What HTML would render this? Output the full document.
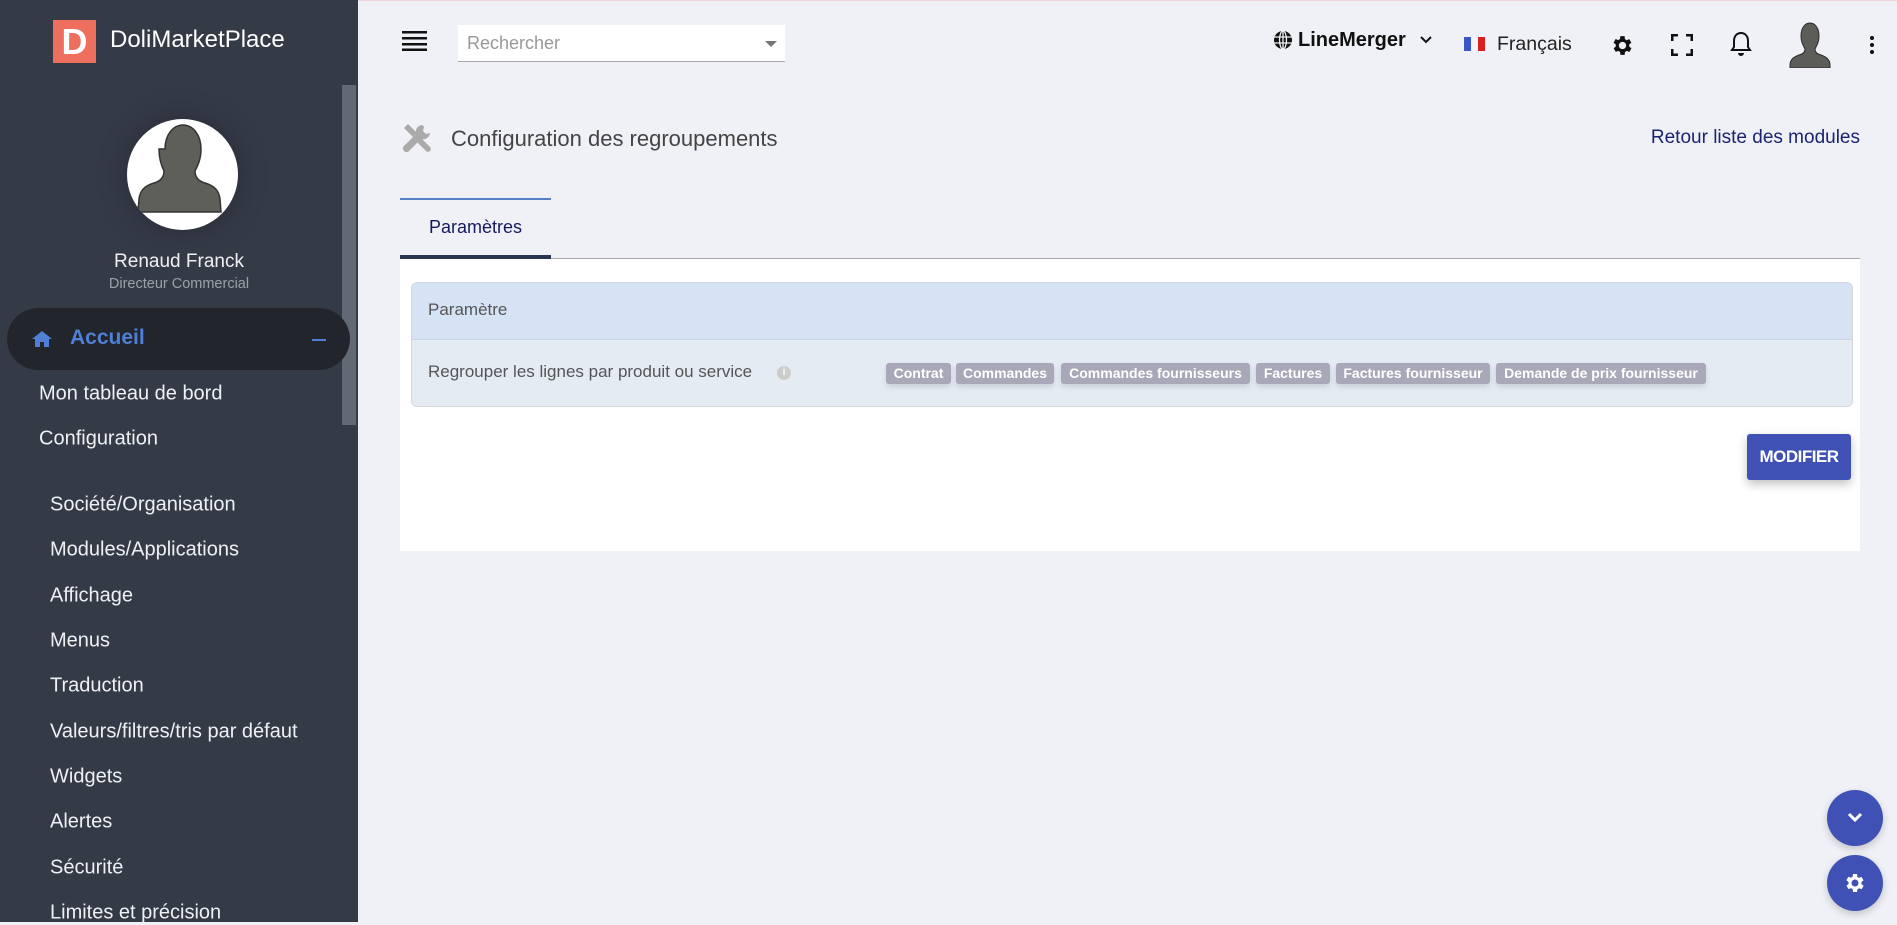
<!DOCTYPE html>
<html><head><meta charset="utf-8"><style>
*{margin:0;padding:0;box-sizing:border-box}
body{width:1897px;height:922px;overflow:hidden;background:#f0f1f6;font-family:"Liberation Sans",sans-serif;position:relative}
.a{position:absolute}
#side{left:0;top:0;width:358px;height:922px;background:#353a47}
.mi{position:absolute;color:#eef0f4;font-size:20px;white-space:nowrap;transform:translateY(-50%)}
.badge{position:absolute;top:363px;height:21px;background:#a9a8b9;color:#fff;font-family:"Liberation Sans Narrow","Liberation Sans",sans-serif;font-weight:bold;font-size:14px;line-height:21px;text-align:center;border-radius:3px;box-shadow:0 3px 6px rgba(0,0,0,.12)}
</style></head><body>
<div class="a" style="left:0;top:0;width:1897px;height:1px;background:#f3d3da"></div>
<div id="side" class="a">
  <div class="a" style="left:53px;top:20px;width:43px;height:43px;background:#ef6f5f;color:#fff;font-weight:bold;font-size:36px;line-height:43px;text-align:center">D</div>
  <div class="a" style="left:110px;top:26px;color:#fff;font-size:24px">DoliMarketPlace</div>
  <div class="a" style="left:342px;top:85px;width:14px;height:340px;background:#636875"></div>
  <div class="a" style="left:127px;top:119px;width:111px;height:111px;border-radius:50%;background:#fff;box-shadow:0 0 30px rgba(0,0,0,.25);overflow:hidden">
    <svg width="111" height="111" viewBox="0 0 111 111"><path d="M38 30c0-14 8-24 18-24s18 10 18 24c0 10-3 16-6 22 0 6 3 10 10 12 10 3 14 8 15 16l1 13H11l1-13c1-8 5-13 15-16 7-2 10-6 10-12-3-6-5-12-5-22z" fill="#5f5f5a" stroke="#333" stroke-width="1.5"/></svg>
  </div>
  <div class="a" style="left:0;width:358px;top:251px;text-align:center;color:#f0f0f0;font-size:19px">Renaud Franck</div>
  <div class="a" style="left:0;width:358px;top:276px;text-align:center;color:#9ca0aa;font-size:14.5px">Directeur Commercial</div>
  <div class="a" style="left:7px;top:308px;width:343px;height:62px;border-radius:31px;background:#22252c"></div>
  <svg class="a" style="left:31px;top:330px" width="22" height="18" viewBox="0 0 22 18"><path d="M11 1L1 9h3v8h5v-5h4v5h5V9h3z" fill="#4f7fd6"/></svg>
  <div class="a" style="left:70px;top:326px;color:#4f7fd6;font-size:21px;font-weight:bold">Accueil</div>
  <div class="a" style="left:312px;top:339px;width:14px;height:2px;background:#4f7fd6"></div>
  <div class="mi" style="left:39px;top:394px">Mon tableau de bord</div>
  <div class="mi" style="left:39px;top:439px">Configuration</div>
  <div class="mi" style="left:50px;top:505px">Société/Organisation</div>
  <div class="mi" style="left:50px;top:550px">Modules/Applications</div>
  <div class="mi" style="left:50px;top:596px">Affichage</div>
  <div class="mi" style="left:50px;top:641px">Menus</div>
  <div class="mi" style="left:50px;top:686px">Traduction</div>
  <div class="mi" style="left:50px;top:732px">Valeurs/filtres/tris par défaut</div>
  <div class="mi" style="left:50px;top:777px">Widgets</div>
  <div class="mi" style="left:50px;top:822px">Alertes</div>
  <div class="mi" style="left:50px;top:868px">Sécurité</div>
  <div class="mi" style="left:50px;top:913px">Limites et précision</div>
</div>
<!-- top bar -->
<svg class="a" style="left:402px;top:31px" width="25" height="20"><g fill="#111"><rect y="0" width="25" height="2.5"/><rect y="6" width="25" height="2.5"/><rect y="12" width="25" height="2.5"/><rect y="17.5" width="25" height="2.5"/></g></svg>
<div class="a" style="left:458px;top:25px;width:327px;height:37px;background:#fff;border-bottom:1px solid #aaa"></div>
<div class="a" style="left:467px;top:33px;color:#999;font-size:18px">Rechercher</div>
<div class="a" style="left:765px;top:41px;border-left:6px solid transparent;border-right:6px solid transparent;border-top:6px solid #777"></div>
<svg class="a" style="left:1273px;top:30px" width="20" height="20" viewBox="0 0 20 20"><circle cx="10" cy="10" r="9" fill="#111"/><g stroke="#f0f1f6" stroke-width="1.3" fill="none"><ellipse cx="10" cy="10" rx="3.5" ry="9"/><line x1="1" y1="7" x2="19" y2="7"/><line x1="1" y1="13" x2="19" y2="13"/><line x1="10" y1="1" x2="10" y2="19"/></g></svg>
<div class="a" style="left:1298px;top:29px;font-weight:bold;font-size:20px;color:#111">LineMerger</div>
<svg class="a" style="left:1420px;top:36px" width="12" height="9"><path d="M1 1l5 5 5-5" stroke="#111" stroke-width="2" fill="none"/></svg>
<div class="a" style="left:1464px;top:37px;width:21px;height:14px;background:linear-gradient(90deg,#3a55c8 33%,#f4f4f4 33% 66%,#d82020 66%)"></div>
<div class="a" style="left:1497px;top:33px;font-size:19.5px;color:#222">Français</div>
<svg class="a" style="left:1610px;top:33px" width="25" height="25" viewBox="0 0 24 24"><path fill="#111" d="M19.4 13a7.5 7.5 0 000-2l2.1-1.6-2-3.5-2.5 1a7.6 7.6 0 00-1.7-1L15 3h-4l-.4 2.8a7.6 7.6 0 00-1.7 1l-2.5-1-2 3.5L6.6 11a7.5 7.5 0 000 2l-2.1 1.6 2 3.5 2.5-1a7.6 7.6 0 001.7 1L11 21h4l.4-2.8a7.6 7.6 0 001.7-1l2.5 1 2-3.5zM13 15.5a3.5 3.5 0 110-7 3.5 3.5 0 010 7z" transform="translate(-1 0)"/></svg>
<svg class="a" style="left:1671px;top:34px" width="22" height="22"><path d="M1 7V1h6M15 1h6v6M21 15v6h-6M7 21H1v-6" stroke="#111" stroke-width="3" fill="none"/></svg>
<svg class="a" style="left:1730px;top:31px" width="22" height="26" viewBox="0 0 22 26"><path d="M11 2c-4 0-7 3-7 8v6l-2 3h18l-2-3v-6c0-5-3-8-7-8z" stroke="#111" stroke-width="2" fill="none"/><path d="M8 22a3 3 0 006 0z" fill="#111"/></svg>
<svg class="a" style="left:1788px;top:22px" width="44" height="46" viewBox="0 0 44 46"><path d="M13 14c0-8 4-13 9-13s9 5 9 13c0 6-2 9-4 13 0 3 2 5 6 6 6 2 9 5 9 10v3H2v-3c0-5 3-8 9-10 4-1 6-3 6-6-2-4-4-7-4-13z" fill="#5c5c58" stroke="#2a2a2a"/></svg>
<svg class="a" style="left:1869px;top:36px" width="6" height="18"><circle cx="3" cy="2" r="2" fill="#111"/><circle cx="3" cy="9" r="2" fill="#111"/><circle cx="3" cy="16" r="2" fill="#111"/></svg>
<!-- title -->
<svg class="a" style="left:401px;top:122px" width="32" height="32" viewBox="0 0 32 32"><g fill="#aaa"><path d="M3 6l4-4 9 9-4 4z"/><path d="M14 18l4-4 11 11c1 1 1 3 0 4s-3 1-4 0z"/><path d="M21 3a7 7 0 00-6 9L3 24c-1.5 1.5-1.5 3.5 0 5s3.5 1.5 5 0l12-12a7 7 0 009-6l-4 1-3-3 1-4c-.7-1-1.3-2-2-2z"/></g></svg>
<div class="a" style="left:451px;top:126px;font-size:22px;color:#444">Configuration des regroupements</div>
<div class="a" style="right:37px;top:127px;font-size:19px;color:#1b2470">Retour liste des modules</div>
<!-- tab -->
<div class="a" style="left:400px;top:198px;width:151px;height:2px;background:#5580c8"></div>
<div class="a" style="left:400px;top:217px;width:151px;text-align:center;font-size:18px;color:#151a60">Paramètres</div>
<div class="a" style="left:400px;top:258px;width:1460px;height:1px;background:#aaa"></div>
<div class="a" style="left:400px;top:255px;width:151px;height:4px;background:#283650"></div>
<div class="a" style="left:400px;top:259px;width:1460px;height:292px;background:#fff"></div>
<div class="a" style="left:411px;top:282px;width:1442px;height:125px;border:1px solid #d4d6dc;border-radius:6px;overflow:hidden;background:#e5ebf3">
  <div style="height:57px;background:#d6e3f5;border-bottom:1px solid #ccd4e0"></div>
</div>
<div class="a" style="left:428px;top:300px;font-size:17px;color:#555">Paramètre</div>
<div class="a" style="left:428px;top:362px;font-size:17px;color:#555">Regrouper les lignes par produit ou service</div>
<div class="a" style="left:777px;top:366px;width:14px;height:14px;border-radius:50%;background:#ccc;color:#fff;font-size:10px;font-weight:bold;text-align:center;line-height:14px">i</div>
<div class="badge" style="left:886px;width:65px">Contrat</div>
<div class="badge" style="left:956px;width:98px">Commandes</div>
<div class="badge" style="left:1061px;width:189px">Commandes fournisseurs</div>
<div class="badge" style="left:1256px;width:74px">Factures</div>
<div class="badge" style="left:1336px;width:154px">Factures fournisseur</div>
<div class="badge" style="left:1496px;width:210px">Demande de prix fournisseur</div>
<div class="a" style="left:1747px;top:434px;width:104px;height:46px;background:#3f51b5;border-radius:3px;color:#fff;font-weight:bold;font-size:17px;line-height:46px;text-align:center;box-shadow:0 4px 10px rgba(0,0,0,.25);letter-spacing:-.5px">MODIFIER</div>
<!-- floating -->
<div class="a" style="left:1827px;top:790px;width:56px;height:56px;border-radius:50%;background:#3f51b5;box-shadow:0 3px 8px rgba(0,0,0,.2)"></div>
<svg class="a" style="left:1847px;top:812px" width="16" height="12"><path d="M2 2l6 6 6-6" stroke="#fff" stroke-width="3" fill="none"/></svg>
<div class="a" style="left:1827px;top:855px;width:56px;height:56px;border-radius:50%;background:#3f51b5;box-shadow:0 3px 8px rgba(0,0,0,.2)"></div>
<svg class="a" style="left:1843px;top:871px" width="24" height="24" viewBox="0 0 24 24"><path fill="#fff" d="M19.4 13a7.5 7.5 0 000-2l2.1-1.6-2-3.5-2.5 1a7.6 7.6 0 00-1.7-1L15 3h-4l-.4 2.8a7.6 7.6 0 00-1.7 1l-2.5-1-2 3.5L6.6 11a7.5 7.5 0 000 2l-2.1 1.6 2 3.5 2.5-1a7.6 7.6 0 001.7 1L11 21h4l.4-2.8a7.6 7.6 0 001.7-1l2.5 1 2-3.5zM13 15.5a3.5 3.5 0 110-7 3.5 3.5 0 010 7z" transform="translate(-1 0)"/></svg>
</body></html>
